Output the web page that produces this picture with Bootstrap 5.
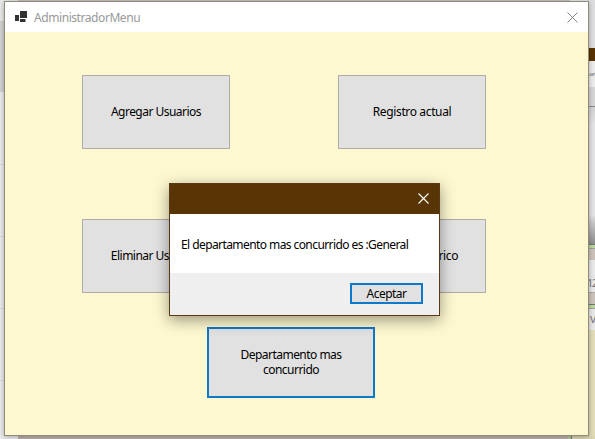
<!DOCTYPE html>
<html lang="es">
<head>
<meta charset="utf-8">
<meta name="viewport" content="width=device-width, initial-scale=1">
<title>AdministradorMenu</title>
<link href="https://cdn.jsdelivr.net/npm/bootstrap@5.3.0/dist/css/bootstrap.min.css" rel="stylesheet">
<style>
  body { width: 595px; height: 439px; background: #ebebeb; font: 12px/15px "Noto Sans", "Open Sans", sans-serif; color: #000; letter-spacing: -.52px; }
  /* desktop behind the windows */
  .strip-left { width: 4px; background: linear-gradient(#e9e9e9 21px, #ccc 21px, #ccc 22px, #d2d2d2 22px, #d2d2d2 92px, #ebebeb 92px); }
  .strip-left::after { content: ""; display: block; height: 217px; margin-top: 164px; background: repeating-linear-gradient(#d8d8d8 0 1px, #ebebeb 1px 72px); }
  .strip-right { width: 8px; color: #777; line-height: 16px; }
  .strip-right > div { flex: none; overflow: hidden; white-space: nowrap; }
  .r-sky { height: 48px; background: #dedee0; }
  .r-brown { height: 13px; background: #593404; }
  .r-text { height: 26px; background: #ececec; font-size: 6px; line-height: 27px; }
  .r-foot { height: 20px; background: #d6d6d6; border-bottom: 1px solid #888; }
  .r-fade { height: 137px; background: linear-gradient(#d2d2d2, #e3e3e5 18px, #e3e3e5 108px, #ccc 114px, #8e8e8e); }
  .r-green { height: 5px; background: #bcd6a0; border-top: 1px solid #777; border-bottom: 1px solid #a2a2a2; }
  .r-clay { height: 11px; background: #cdc3bd; }
  .r-num { height: 33px; background: #e9e9e9; font-size: 11px; line-height: 46px; letter-spacing: -1.500px; border-bottom: 1px solid #aaa; }
  .r-v { height: 21px; background: #e9e9e9; padding-left: 3px; line-height: 19px; }
  .r-yellow { background: #e2dcb8; }
  .strip-top { height: 1px; top: 0; left: 18px; right: 25px; background: #c9c2bd; }
  .strip-bottom { height: 3px; left: 0; }
  .b-clay { width: 553px; margin-left: 18px; background: #beb3ad; border-right: 3px solid #b5cc9d; }
  .b-yellow { background: #ddd8b2; border-left: 1px solid #777; }

  .app-window { left: 4px; top: 1px; width: 585px; height: 435px; background: #fdf8cf; border: 1px solid #8f8c7c; box-shadow: 0 1px 5px rgba(0,0,0,.3); }
  .title-bar { height: 30px; padding: 0 10px; background: #fff; color: #999; letter-spacing: -.43px; }
  .window-title { margin-left: 6px; }
  .form-area { padding: 43px 102px 0 77px; }
  .win-btn { width: 148px; height: 74px; padding: 0 0 1px; border: 1px solid #adada5; border-radius: 0; background: #e1e1e1; color: #000; font: inherit; letter-spacing: inherit; }
  .win-btn:hover { background: #e1e1e1; border-color: #adada5; color: #000; }
  .btn-wide { letter-spacing: -.36px; }
  .gap-rows { row-gap: 70px; }
  .btn-focus, .btn-focus:hover { width: 168px; height: 71px; border: 2px solid #0f78c8; margin: 34px 0 0 125px; }
  .message-box { left: 169px; top: 183px; width: 271px; height: 133px; border: 1px solid #593a14; background: #fff; box-shadow: 0 4px 14px rgba(0,0,0,.4); }
  .message-title { height: 30px; background: #593404; padding: 0 10px 2px 0; }
  .message-text { height: 59px; padding: 1px 0 0 11px; letter-spacing: -.58px; }
  .message-actions { background: #efefef; padding: 0 16px 1px 0; }
  .btn-accept, .btn-accept:hover { width: 73px; height: 21px; padding: 0; border: 2px solid #0f78c8; line-height: 17px; }
</style>
<script src="https://cdn.jsdelivr.net/npm/bootstrap@5.3.0/dist/js/bootstrap.bundle.min.js"></script>
</head>
<body class="position-relative overflow-hidden m-0">
  <div class="d-flex justify-content-between h-100" aria-hidden="true">
    <div class="strip-left h-100 overflow-hidden"></div>
    <div class="strip-right d-flex flex-column h-100">
      <div class="r-sky"></div><div class="r-brown"></div><div class="r-text">uari</div><div class="r-foot"></div>
      <div class="r-fade"></div><div class="r-green"></div><div class="r-clay"></div><div class="r-num">12</div>
      <div class="r-clay"></div><div class="r-green"></div><div class="r-v">v</div><div class="r-yellow flex-fill"></div>
    </div>
  </div>
  <div class="strip-top position-absolute"></div>
  <div class="strip-bottom position-absolute bottom-0 w-100 d-flex"><div class="b-clay"></div><div class="b-yellow flex-fill"></div></div>

  <main class="app-window position-absolute">
    <header class="title-bar d-flex align-items-center">
      <svg width="13" height="12" viewBox="0 0 13 12" fill="#333" aria-hidden="true"><path d="M5 0h7v7H5zM0 4h4v6H0zM5 8h5.500v3H5z"/></svg>
      <span class="window-title me-auto">AdministradorMenu</span>
      <svg width="11" height="11" viewBox="0 0 11 11" stroke="#858585" stroke-width="1" aria-hidden="true"><path d="M.5.5l10 10M10.500.5l-10 10"/></svg>
    </header>
    <section class="form-area">
      <div class="d-flex flex-column gap-rows">
        <div class="d-flex justify-content-between"><button class="btn win-btn">Agregar Usuarios</button><button class="btn win-btn btn-wide">Registro actual</button></div>
        <div class="d-flex justify-content-between"><button class="btn win-btn">Eliminar Usuarios</button><button class="btn win-btn btn-wide">Registro historico</button></div>
      </div>
      <button class="btn win-btn btn-focus">Departamento mas<br>concurrido</button>
    </section>
  </main>

  <div class="message-box position-absolute d-flex flex-column" role="dialog">
    <div class="message-title d-flex align-items-center justify-content-end">
      <svg width="11" height="11" viewBox="0 0 11 11" stroke="#fff" stroke-width="1.1" aria-hidden="true"><path d="M.5.5l10 10M10.500.5l-10 10"/></svg>
    </div>
    <div class="message-text d-flex align-items-center">El departamento mas concurrido es :General</div>
    <div class="message-actions flex-fill d-flex align-items-center justify-content-end"><button class="btn win-btn btn-accept">Aceptar</button></div>
  </div>
</body>
</html>
